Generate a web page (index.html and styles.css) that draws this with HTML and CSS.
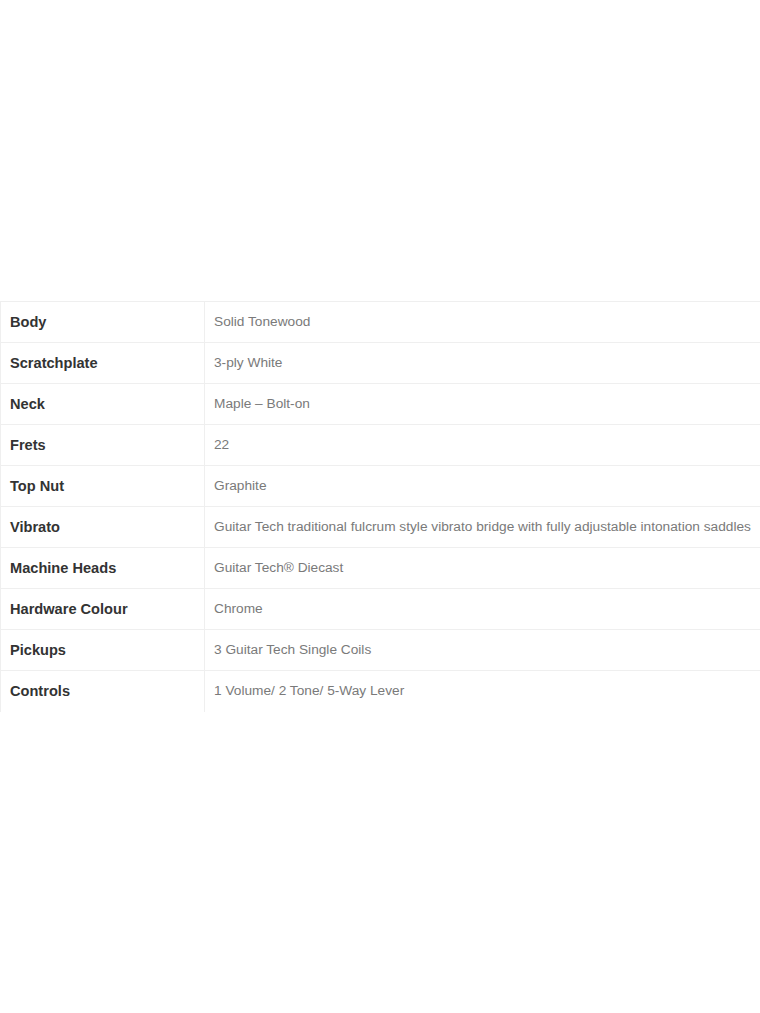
FILE: index.html
```html
<!DOCTYPE html>
<html>
<head>
<meta charset="utf-8">
<link rel="stylesheet" href="styles.css">
</head>
<body>
<div class="page">
<table class="specs">
<tr><th>Body</th><td>Solid Tonewood</td></tr>
<tr><th>Scratchplate</th><td>3-ply White</td></tr>
<tr><th>Neck</th><td>Maple – Bolt-on</td></tr>
<tr><th>Frets</th><td>22</td></tr>
<tr><th>Top Nut</th><td>Graphite</td></tr>
<tr><th>Vibrato</th><td>Guitar Tech traditional fulcrum style vibrato bridge with fully adjustable intonation saddles</td></tr>
<tr><th>Machine Heads</th><td>Guitar Tech® Diecast</td></tr>
<tr><th>Hardware Colour</th><td>Chrome</td></tr>
<tr><th>Pickups</th><td>3 Guitar Tech Single Coils</td></tr>
<tr><th>Controls</th><td>1 Volume/ 2 Tone/ 5-Way Lever</td></tr>
</table>
</div>
</body>
</html>
```
FILE: styles.css
```css
html, body {
  margin: 0;
  padding: 0;
  background: #fff;
}
.page {
  padding-top: 301px;
  width: 780px;
  font-family: "Liberation Sans", Arial, sans-serif;
}
.specs {
  border-collapse: collapse;
  width: 780px;
  font-size: 13.7px;
}
.specs tr {
  height: 41px;
}
.specs th, .specs td {
  border: 1px solid #efefef;
  padding: 0 9px 1px;
  text-align: left;
  vertical-align: middle;
  white-space: nowrap;
}
.specs tr:last-child th, .specs tr:last-child td {
  border-bottom: none;
}
.specs th {
  width: 185px;
  font-weight: bold;
  color: #333;
  font-size: 14.6px;
}
.specs td {
  color: #7a7a7a;
}
```
